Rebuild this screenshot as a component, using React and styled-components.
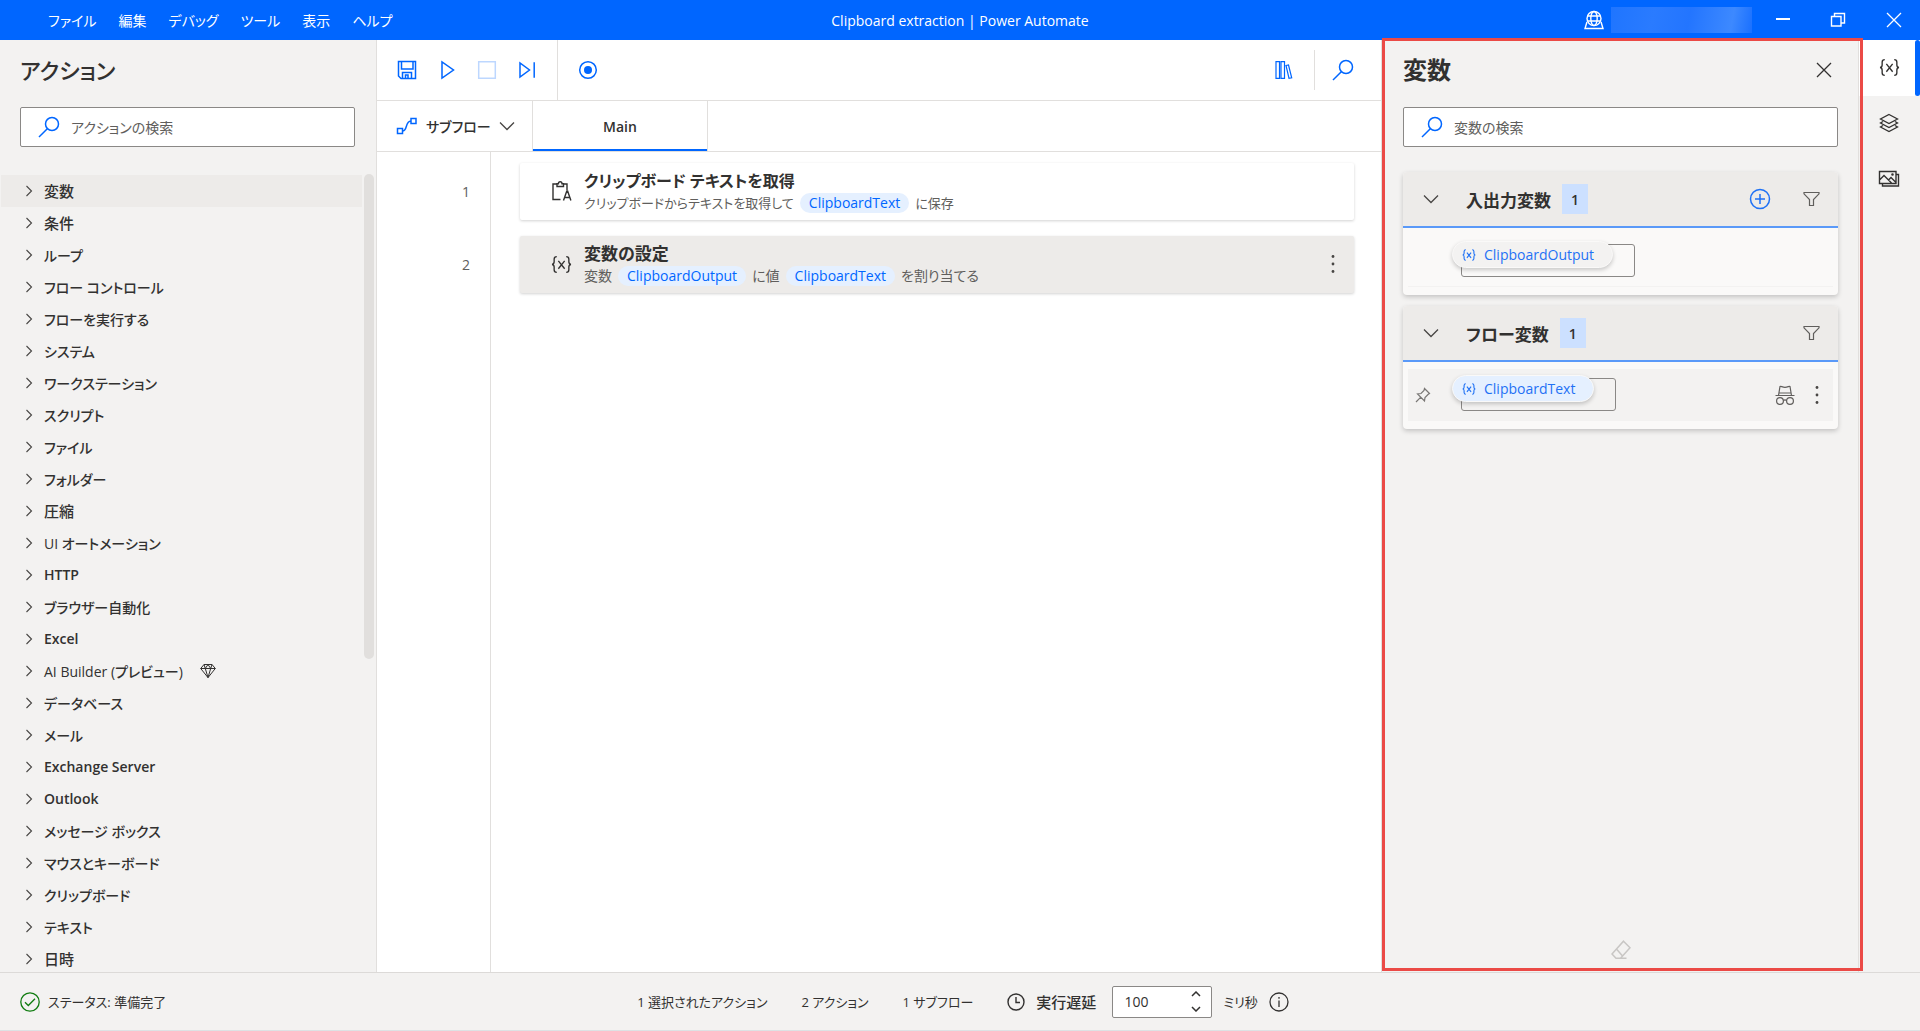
import React, { useState } from "react";
import styled, { createGlobalStyle } from "styled-components";

const GlobalStyle = createGlobalStyle`
  * {
    box-sizing: border-box;
  }
  body {
    margin: 0;
    color: #323130;
    font-family: "Open Sans", "Noto Sans CJK JP", sans-serif;
    font-size: 14px;
    font-feature-settings: "palt";
  }
  button,
  input {
    font: inherit;
    font-feature-settings: inherit;
    color: inherit;
  }
  ul,
  ol {
    list-style: none;
    margin: 0;
    padding: 0;
  }
  h1,
  h2,
  h3,
  p {
    margin: 0;
  }
`;

const Window = styled.div`
  display: flex;
  flex-direction: column;
  height: 100vh;
  overflow: hidden;
  background: #f3f2f1;
`;

const Button = styled.button`
  display: flex;
  align-items: center;
  justify-content: center;
  flex-shrink: 0;
  width: ${p => p.$width || 20}px;
  height: ${p => p.$height || 20}px;
  padding: 0;
  border: none;
  background: none;
  color: ${p => p.$color || "#323130"};
`;

/* ---- title bar ---- */
const TitleBar = styled.header`
  display: grid;
  grid-template-columns: 1fr auto 1fr;
  align-items: center;
  flex-shrink: 0;
  height: 40px;
  background: #0066ff;
  color: #fff;
`;
const MenuBar = styled.nav`
  display: flex;
  gap: 22px;
  padding: 2px 0 0 48px;
`;
const MenuButton = styled.button`
  padding: 0;
  border: none;
  background: none;
  color: #fff;
  font-size: 14px;
  line-height: 20px;
`;
const WindowTitle = styled.h1`
  padding-top: 2px;
  font-size: 14px;
  font-weight: 400;
  line-height: 20px;
`;
const Account = styled.div`
  display: flex;
  align-items: center;
  justify-content: flex-end;
`;
const AccountName = styled.div`
  width: 141px;
  height: 26px;
  margin: 0 6px 0 7px;
  background: linear-gradient(100deg, #1f75ff, #2a7bff 30%, #2375ff 55%, #3d89ff 85%, #1a70ff);
`;

/* ---- main area ---- */
const Body = styled.div`
  display: flex;
  flex: 1;
  min-height: 0;
`;
const PanelTitle = styled.h2`
  font-size: ${p => (p.$kana ? 22 : 24)}px;
  font-weight: ${p => (p.$kana ? 500 : 600)};
  line-height: 32px;
`;
const SearchBox = styled.label`
  display: flex;
  align-items: center;
  gap: 11px;
  flex-shrink: 0;
  height: 40px;
  padding-left: 17px;
  border: 1px solid #8a8886;
  border-radius: 2px;
  background: #fff;
  color: #0066ff;
  input {
    flex: 1;
    min-width: 0;
    padding: 0;
    border: none;
    outline: none;
    background: none;
    font-size: 14px;
  }
  input::placeholder {
    color: #605e5c;
    opacity: 1;
  }
`;

const ActionsPanel = styled.aside`
  display: flex;
  flex-direction: column;
  flex-shrink: 0;
  width: 377px;
  padding-top: 14px;
  border-right: 1px solid #e1dfdd;
`;
const ActionsHead = styled.div`
  display: flex;
  flex-direction: column;
  gap: 21px;
  padding: 0 21px 27px 20px;
`;
const Scroller = styled.div`
  display: flex;
  flex: 1;
  min-height: 0;
  gap: 2px;
  padding-left: 1px;
`;
const Groups = styled.ul`
  flex: 1;
  overflow: hidden;
  padding-top: 1px;
`;
const Group = styled.li`
  display: flex;
  align-items: center;
  gap: 11px;
  height: 32px;
  padding: 0 0 1px 24px;
  background: ${p => (p.$active ? "#edebe9" : "transparent")};
`;
const GroupName = styled.span`
  margin-right: 6px;
  font-size: ${p => (p.$kanji ? 15 : 14)}px;
  font-weight: ${p => (p.$latin ? 600 : 500)};
`;
const ScrollThumb = styled.div`
  width: 10px;
  height: 485px;
  margin-right: 2px;
  border-radius: 5px;
  background: #e1dfdd;
`;

const Designer = styled.main`
  display: flex;
  flex-direction: column;
  flex: 1;
  min-width: 0;
  background: #fff;
`;
const Toolbar = styled.div`
  display: flex;
  align-items: center;
  flex-shrink: 0;
  height: 61px;
  border-bottom: 1px solid #e1dfdd;
`;
const ToolGroup = styled.div`
  display: flex;
  align-items: center;
  gap: 20px;
  height: ${p => p.$height || 60}px;
  padding: ${p => p.$padding};
  border-right: ${p => (p.$divided ? "1px solid #e1dfdd" : "none")};
  margin-left: ${p => (p.$end ? "auto" : 0)};
`;
const Tabs = styled.div`
  display: flex;
  flex-shrink: 0;
  height: 51px;
  border-bottom: 1px solid #e1dfdd;
`;
const SubflowButton = styled.button`
  display: flex;
  align-items: center;
  gap: 8px;
  width: 156px;
  padding: 0 17px 0 19px;
  border: none;
  border-right: 1px solid #e1dfdd;
  background: none;
  font-weight: 500;
  white-space: nowrap;
  span {
    flex: 1;
    text-align: left;
  }
`;
const Tab = styled.button`
  width: 175px;
  padding: 1px 0 0;
  border: none;
  border-right: 1px solid #e1dfdd;
  background: #fff;
  box-shadow: inset 0 -2px #0066ff;
  font-weight: 600;
`;
const Canvas = styled.ol`
  display: flex;
  flex-direction: column;
  gap: 16px;
  flex: 1;
  padding: 11px 27px 0 0;
  background: linear-gradient(#e1dfdd, #e1dfdd) 113px 0 / 1px 100% no-repeat;
`;
const Step = styled.li`
  display: flex;
  align-items: center;
  height: 57px;
`;
const StepNumber = styled.span`
  width: 93px;
  margin-right: 50px;
  color: #605e5c;
  text-align: right;
`;
const StepCard = styled.article`
  display: flex;
  align-items: center;
  gap: 12px;
  flex: 1;
  height: 57px;
  padding: 0 11px 1px 31px;
  border-radius: 2px;
  background: ${p => (p.$selected ? "#edebe9" : "#fff")};
  box-shadow: 0 1px 3px rgba(0, 0, 0, 0.18);
`;
const StepText = styled.div`
  flex: 1;
`;
const StepTitle = styled.h3`
  font-size: ${p => (p.$kana ? 16 : 17)}px;
  font-weight: 600;
  line-height: 24px;
`;
const StepDetail = styled.p`
  display: flex;
  align-items: center;
  gap: 6px;
  color: #605e5c;
  font-size: ${p => (p.$kana ? 13 : 14)}px;
  line-height: 20px;
`;
const Chip = styled.span`
  padding: 0 9px;
  border-radius: 10px;
  background: #e5f0ff;
  color: #0066ff;
  font-size: 14px;
`;

/* ---- variables ---- */
const VariablesPanel = styled.aside`
  position: relative;
  display: flex;
  flex-direction: column;
  flex-shrink: 0;
  width: 478px;
  padding: 14px 20px 12px 21px;
  border: 1px solid #e1dfdd;
  border-width: 0 1px;
`;
const Highlight = styled.div`
  position: absolute;
  z-index: 1;
  inset: -2px -5px 1px 0;
  border: 3px solid #eb4a46;
  pointer-events: none;
`;
const VariablesHead = styled.div`
  display: flex;
  justify-content: space-between;
  align-items: center;
  padding-right: 4px;
  margin-bottom: 21px;
`;
const VariableGroups = styled.div`
  display: flex;
  flex-direction: column;
  gap: 11px;
  flex: 1;
  padding-top: 25px;
`;
const VariableGroup = styled.section`
  height: 123px;
  border-radius: 4px;
  background: #faf9f8;
  box-shadow: 0 2px 5px rgba(0, 0, 0, 0.2);
`;
const GroupHeader = styled.div`
  display: flex;
  align-items: center;
  height: 56px;
  padding: 0 17px 0 18px;
  border-bottom: 2px solid #5a99f8;
  border-radius: 4px 4px 0 0;
  background: #edebe9;
  h3 {
    margin: 0 11px 0 25px;
    font-size: 17px;
    font-weight: 600;
  }
`;
const Count = styled.span`
  display: flex;
  align-items: center;
  justify-content: center;
  width: 26px;
  height: 30px;
  margin-right: auto;
  background: #cce0ff;
  font-weight: 600;
`;
const VariableRow = styled.div`
  display: flex;
  align-items: center;
  height: 52px;
  margin: 7px 5px;
  padding: 0 6px 0 7px;
  border-bottom: 1px solid #f3f2f1;
  background: ${p => (p.$hovered ? "#f3f2f1" : "transparent")};
`;
const PinSlot = styled.div`
  width: 46px;
`;
const ValueBox = styled.div`
  height: 33px;
  margin: 0 auto 0 0;
  border: 1px solid #8a8886;
  border-radius: 3px;
`;
const VariablePill = styled.button`
  display: flex;
  align-items: center;
  gap: 8px;
  height: 27px;
  margin: -4px 21px 0 -10px;
  padding: 0 18px 0 9px;
  border: 1px solid #faf9f8;
  border-radius: 14px;
  background: ${p => (p.$selected ? "#e5f0ff" : "#f3f2f1")};
  box-shadow: 0 2px 4px rgba(0, 0, 0, 0.2);
  color: #1f71f5;
`;
const PanelFoot = styled.div`
  display: flex;
  justify-content: center;
`;

const Rail = styled.nav`
  display: flex;
  flex-direction: column;
  flex-shrink: 0;
  width: 61px;
`;
const RailButton = styled.button`
  display: flex;
  align-items: center;
  justify-content: center;
  height: 56px;
  padding: 0 1px 2px 0;
  border: none;
  background: ${p => (p.$active ? "#fff" : "none")};
  position: relative;
  &::after {
    content: "";
    display: ${p => (p.$active ? "block" : "none")};
    position: absolute;
    inset: 0 0 0 auto;
    width: 5px;
    border-radius: 3px;
    background: #0066ff;
  }
`;

/* ---- status bar ---- */
const StatusBar = styled.footer`
  display: grid;
  grid-template-columns: 1fr auto 1fr;
  align-items: center;
  flex-shrink: 0;
  height: 59px;
  padding: 0 14px 0 20px;
  border-top: 1px solid #dcdad8;
  border-bottom: 1px solid #dde2e4;
  font-size: 13px;
`;
const StatusItem = styled.div`
  display: flex;
  align-items: center;
  gap: 8px;
`;
const StatusGroup = styled.div`
  display: flex;
  align-items: center;
  gap: 34px;
`;
const Delay = styled.div`
  display: flex;
  align-items: center;
  gap: 11px;
  label {
    font-size: 15px;
    font-weight: 500;
  }
`;
const Spinner = styled.div`
  display: flex;
  align-items: center;
  width: 100px;
  height: 32px;
  margin-left: 5px;
  padding: 0 9px 0 11px;
  border: 1px solid #8a8886;
  border-radius: 2px;
  background: #fff;
  font-size: 14px;
  input {
    flex: 1;
    min-width: 0;
    padding: 0;
    border: none;
    outline: none;
    background: none;
  }
`;

const Icon = ({ width = 20, height = 20, stroke = 1.3, color = "currentColor", children, box }) => (
  <svg
    width={width}
    height={height}
    viewBox={box || `0 0 ${width} ${height}`}
    fill="none"
    stroke={color}
    strokeWidth={stroke}
    aria-hidden="true"
  >
    {children}
  </svg>
);

const SearchIcon = () => (
  <Icon width={22} height={22} stroke={1.5}>
    <circle cx="14" cy="8" r="6.5" />
    <path d="M9.3 12.7 1 21" />
  </Icon>
);
const ChevronRight = () => (
  <Icon width={8} height={12} stroke={1.1} color="#484644">
    <path d="M1.5 1 6.500 6l-5 5" />
  </Icon>
);
const ChevronDown = () => (
  <Icon width={16} height={10} stroke={1.3} color="#484644">
    <path d="m1 1.5 7 7 7-7" />
  </Icon>
);
const CloseIcon = () => (
  <Icon width={16} height={16} stroke={1.3}>
    <path d="m1 1 14 14M15 1 1 15" />
  </Icon>
);
const DiamondIcon = () => (
  <Icon width={16} height={16} stroke={1}>
    <path d="M4 1.5h8l3.3 4L8 14.6.7 5.500zM.7 5.500h14.600M4 1.500l1.300 4L8 14.600l2.700-9.100 1.300-4M5.300 5.500 8 1.500l2.700 4" />
  </Icon>
);
const MoreIcon = () => (
  <Icon width={4} height={20} color="none">
    <g fill="#484644">
      <circle cx="2" cy="2.500" r="1.400" />
      <circle cx="2" cy="10" r="1.400" />
      <circle cx="2" cy="17.500" r="1.400" />
    </g>
  </Icon>
);
const VariableIcon = ({ size = 20, stroke = 1.3 }) => (
  <Icon width={size} height={size} box="0 0 20 20" stroke={stroke}>
    <path d="M5.500 2.500c-2 0-2.500.8-2.500 2.500v2.500C3 9 2.500 9.800 1 10c1.500.2 2 1 2 2.500V15c0 1.700.5 2.500 2.500 2.500M14.500 2.500c2 0 2.500.8 2.500 2.500v2.500c0 1.500.5 2.300 2 2.500-1.500.2-2 1-2 2.500V15c0 1.700-.5 2.500-2.500 2.500M7 6.500l6 7.500M13 6.500 7 14" />
  </Icon>
);
const FilterIcon = () => (
  <Icon width={17} height={16} stroke={1.2} color="#605e5c">
    <path d="M1 1.500h15v1.300L10.500 8.500v6h-4v-6L1 2.800z" />
  </Icon>
);

const groups = [
  "変数",
  "条件",
  "ループ",
  "フロー コントロール",
  "フローを実行する",
  "システム",
  "ワークステーション",
  "スクリプト",
  "ファイル",
  "フォルダー",
  "圧縮",
  "UI オートメーション",
  "HTTP",
  "ブラウザー自動化",
  "Excel",
  "AI Builder (プレビュー)",
  "データベース",
  "メール",
  "Exchange Server",
  "Outlook",
  "メッセージ ボックス",
  "マウスとキーボード",
  "クリップボード",
  "テキスト",
  "日時"
];
const kanjiOnly = /^[\u4e00-\u9fff]+$/;
const latinOnly = /^[\w ]+$/;
const menus = ["ファイル", "編集", "デバッグ", "ツール", "表示", "ヘルプ"];

const Header = () => (
  <TitleBar>
    <MenuBar>
      {menus.map(name => (
        <MenuButton key={name}>{name}</MenuButton>
      ))}
    </MenuBar>
    <WindowTitle>Clipboard extraction | Power Automate</WindowTitle>
    <Account>
      <Icon width={20} height={20} stroke={1.4}>
        <circle cx="10" cy="8.500" r="7" />
        <ellipse cx="10" cy="8.500" rx="3.200" ry="7" />
        <path d="M3.800 6h12.400M3.800 11h12.400M3.500 12.500H2.800L1 18.500h18l-1.800-6h-.7" />
      </Icon>
      <AccountName />
      <Button $width={50} $height={32} $color="#fff" aria-label="最小化">
        <Icon width={16} height={16} stroke={2}>
          <path d="M1 7h14" />
        </Icon>
      </Button>
      <Button $width={60} $height={32} $color="#fff" aria-label="元に戻す">
        <Icon width={16} height={16} stroke={1.400}>
          <path d="M1.500 4.500h9.500v9.500H1.500zM4.500 4.500v-3H14.500v9.500H11" />
        </Icon>
      </Button>
      <Button $width={52} $height={32} $color="#fff" aria-label="閉じる">
        <CloseIcon />
      </Button>
    </Account>
  </TitleBar>
);

const Actions = () => (
  <ActionsPanel>
    <ActionsHead>
      <PanelTitle $kana>アクション</PanelTitle>
      <SearchBox>
        <SearchIcon />
        <input type="text" placeholder="アクションの検索" aria-label="アクションの検索" />
      </SearchBox>
    </ActionsHead>
    <Scroller>
      <Groups>
        {groups.map((name, index) => (
          <Group key={name} $active={index === 0}>
            <ChevronRight />
            <GroupName $kanji={kanjiOnly.test(name)} $latin={latinOnly.test(name)}>
              {name}
            </GroupName>
            {name.startsWith("AI") && <DiamondIcon />}
          </Group>
        ))}
      </Groups>
      <ScrollThumb />
    </Scroller>
  </ActionsPanel>
);

const Tools = () => (
  <Toolbar>
    <ToolGroup $padding="0 20px 0 20px" $divided>
      <Button $color="#0066ff" aria-label="保存">
        <Icon stroke={1.500}>
          <path d="M1.500 1.500h17v17H4l-2.500-2.500zM4.500 1.500v7.500h11.500V1.500M5.500 18.500v-6h9v6M8.500 18.500v-3.500h2.500v3.500" />
        </Icon>
      </Button>
      <Button $color="#0066ff" aria-label="実行">
        <Icon stroke={1.500}>
          <path d="M5 2v16l11.500-8z" />
        </Icon>
      </Button>
      <Button $color="#bdd7ff" aria-label="停止">
        <Icon stroke={1.500}>
          <path d="M1.700 1.700h16.600v16.600H1.700z" />
        </Icon>
      </Button>
      <Button $color="#0066ff" aria-label="次のアクションを実行">
        <Icon stroke={1.500}>
          <path d="M3 3v14L12.500 10zM17.200 2.200v15.600" />
        </Icon>
      </Button>
    </ToolGroup>
    <ToolGroup $padding="0 20px">
      <Button $color="#0066ff" aria-label="レコーダー">
        <Icon stroke={1.500}>
          <circle cx="10" cy="10" r="8.300" />
          <circle cx="10" cy="10" r="4" fill="currentColor" stroke="none" />
        </Icon>
      </Button>
    </ToolGroup>
    <ToolGroup $padding="0 20px" $height={40} $end $divided>
      <Button $color="#0066ff" aria-label="ライブラリ">
        <Icon stroke={1.200}>
          <path d="M2 1.700h3.500v16.600H2zM7 1.700h3.500v16.600H7zM12 5.500l2.500-.5 3.200 12.800-2.700.5z" />
        </Icon>
      </Button>
    </ToolGroup>
    <ToolGroup $padding="0 27px 0 17px">
      <Button $width={22} $color="#0066ff" aria-label="検索">
        <SearchIcon />
      </Button>
    </ToolGroup>
  </Toolbar>
);

const Flow = () => (
  <Designer>
    <Tools />
    <Tabs>
      <SubflowButton>
        <Icon width={22} height={18} stroke={1.500} color="#0066ff">
          <path d="M1.500 11.500h5v5h-5zM15 1.500h5v5h-5zM6.500 14c2.500 0 3-1.500 3.800-4.500S12 4 15 4" />
        </Icon>
        <span>サブフロー</span>
        <ChevronDown />
      </SubflowButton>
      <Tab>Main</Tab>
    </Tabs>
    <Canvas>
      <Step>
        <StepNumber>1</StepNumber>
        <StepCard>
          <Icon width={21} height={22} stroke={1.400}>
            <path d="M9.500 19.500H2V4h4M12 4h4v6M6 6.500h6.500V3.700H11c0-1.200-.8-1.900-1.800-1.900S7.400 2.500 7.400 3.700H6zM12.500 20.500l3.300-9.500h.8l3.300 9.500M13.500 17.500h5.500" />
          </Icon>
          <StepText>
            <StepTitle $kana>クリップボード テキストを取得</StepTitle>
            <StepDetail $kana>
              クリップボードからテキストを取得して <Chip>ClipboardText</Chip> に保存
            </StepDetail>
          </StepText>
        </StepCard>
      </Step>
      <Step>
        <StepNumber>2</StepNumber>
        <StepCard $selected>
          <VariableIcon size={21} />
          <StepText>
            <StepTitle>変数の設定</StepTitle>
            <StepDetail>
              変数 <Chip>ClipboardOutput</Chip> に値 <Chip>ClipboardText</Chip> を割り当てる
            </StepDetail>
          </StepText>
          <Button aria-label="その他">
            <MoreIcon />
          </Button>
        </StepCard>
      </Step>
    </Canvas>
  </Designer>
);

const Variables = () => (
  <VariablesPanel>
    <VariablesHead>
      <PanelTitle>変数</PanelTitle>
      <Button aria-label="閉じる">
        <CloseIcon />
      </Button>
    </VariablesHead>
    <SearchBox>
      <SearchIcon />
      <input type="text" placeholder="変数の検索" aria-label="変数の検索" />
    </SearchBox>
    <VariableGroups>
      <VariableGroup>
        <GroupHeader>
          <Button aria-label="折りたたむ">
            <ChevronDown />
          </Button>
          <h3>入出力変数</h3>
          <Count>1</Count>
          <Button $width={82} $color="#1f71f5" aria-label="追加">
            <Icon width={22} height={22} stroke={1.500}>
              <circle cx="11" cy="11" r="9.500" />
              <path d="M11 6v10M6 11h10" />
            </Icon>
          </Button>
          <Button aria-label="フィルター">
            <FilterIcon />
          </Button>
        </GroupHeader>
        <VariableRow>
          <PinSlot />
          <ValueBox>
            <VariablePill>
              <VariableIcon size={14} stroke={1.600} />
              ClipboardOutput
            </VariablePill>
          </ValueBox>
        </VariableRow>
      </VariableGroup>
      <VariableGroup>
        <GroupHeader>
          <Button aria-label="折りたたむ">
            <ChevronDown />
          </Button>
          <h3>フロー変数</h3>
          <Count>1</Count>
          <Button aria-label="フィルター">
            <FilterIcon />
          </Button>
        </GroupHeader>
        <VariableRow $hovered>
          <PinSlot>
            <Button $width={16} aria-label="ピン留め">
              <Icon width={16} height={16} stroke={1.200} color="#797775">
                <path d="m9.500 1.500 5 5-1.500 1-3 3-.5 3.500L2.500 7 6 6.500l3-3zM5.800 10.200 1 15" />
              </Icon>
            </Button>
          </PinSlot>
          <ValueBox>
            <VariablePill $selected>
              <VariableIcon size={14} stroke={1.600} />
              ClipboardText
            </VariablePill>
          </ValueBox>
          <Button $width={44} aria-label="機密情報としてマーク">
            <Icon width={20} height={20} stroke={1.200} color="#605e5c">
              <path d="M.5 10.500h19M3.500 8h13M3.500 10.500l1.500-9c1-.8 2 .8 5 .8s4-1.600 5-.8l1.500 9M8.500 15.500c1-.7 2-.7 3 0" />
              <circle cx="5" cy="16" r="3.400" />
              <circle cx="15" cy="16" r="3.400" />
            </Icon>
          </Button>
          <Button aria-label="その他">
            <MoreIcon />
          </Button>
        </VariableRow>
      </VariableGroup>
    </VariableGroups>
    <PanelFoot>
      <Button aria-label="クリア">
        <Icon width={20} height={20} stroke={1.500} color="#c8c6c4">
          <path d="M12.500 1.200 19 7.700 9.500 18.300H5L1 14zM5.500 9l6 7M4.500 18.300h11" />
        </Icon>
      </Button>
    </PanelFoot>
    <Highlight />
  </VariablesPanel>
);

const SideRail = () => (
  <Rail>
    <RailButton $active aria-label="変数">
      <VariableIcon size={21} />
    </RailButton>
    <RailButton aria-label="UI 要素">
      <Icon width={20} height={20} stroke={1.300}>
        <path d="m10 1.500 8.500 4.500L10 10.500 1.500 6zM4 8.500 1.500 10l8.500 4.500 8.500-4.500L16 8.500M4 12.500 1.500 14l8.500 4.500 8.500-4.500-2.500-1.500" />
      </Icon>
    </RailButton>
    <RailButton aria-label="画像">
      <Icon width={22} height={18} stroke={1.400}>
        <path d="M1.500 1.500h16.500v12H1.500zM18.500 4.500h2v11.500H4.500v-2.500M1.500 10l4.500-4.500 7.500 7.500M10.500 10l2.500-2.500 5 5" />
        <circle cx="14.500" cy="4.500" r=".6" />
      </Icon>
    </RailButton>
  </Rail>
);

const Status = () => {
  const [delay, setDelay] = useState(100);
  return (
    <StatusBar>
      <StatusItem>
        <Icon width={20} height={20} stroke={1.300} color="#107c10">
          <circle cx="10" cy="10" r="9.200" />
          <path d="m5 10.300 3.300 3.200L15 6.800" />
        </Icon>
        ステータス: 準備完了
      </StatusItem>
      <StatusGroup>
        <span>1 選択されたアクション</span>
        <span>2 アクション</span>
        <span>1 サブフロー</span>
        <Delay>
          <Icon width={18} height={18} stroke={1.400}>
            <circle cx="9" cy="9" r="8" />
            <path d="M9 4v5.500h4" />
          </Icon>
          <label htmlFor="delay">実行遅延</label>
          <Spinner>
            <input
              id="delay"
              type="text"
              value={delay}
              onChange={e => setDelay(Number(e.target.value) || 0)}
            />
            <div>
              <Button $width={12} $height={15} aria-label="増やす" onClick={() => setDelay(delay + 1)}>
                <Icon width={10} height={6} stroke={1.500}>
                  <path d="m1 5 4-4 4 4" />
                </Icon>
              </Button>
              <Button $width={12} $height={15} aria-label="減らす" onClick={() => setDelay(delay - 1)}>
                <Icon width={10} height={6} stroke={1.500}>
                  <path d="m1 1 4 4 4-4" />
                </Icon>
              </Button>
            </div>
          </Spinner>
          <span>ミリ秒</span>
          <Icon width={20} height={20} stroke={1.300}>
            <circle cx="10" cy="10" r="9" />
            <path d="M10 8.500V15M10 5v1.700" />
          </Icon>
        </Delay>
      </StatusGroup>
    </StatusBar>
  );
};

const App = () => (
  <Window>
    <GlobalStyle />
    <Header />
    <Body>
      <Actions />
      <Flow />
      <Variables />
      <SideRail />
    </Body>
    <Status />
  </Window>
);

export default App;
